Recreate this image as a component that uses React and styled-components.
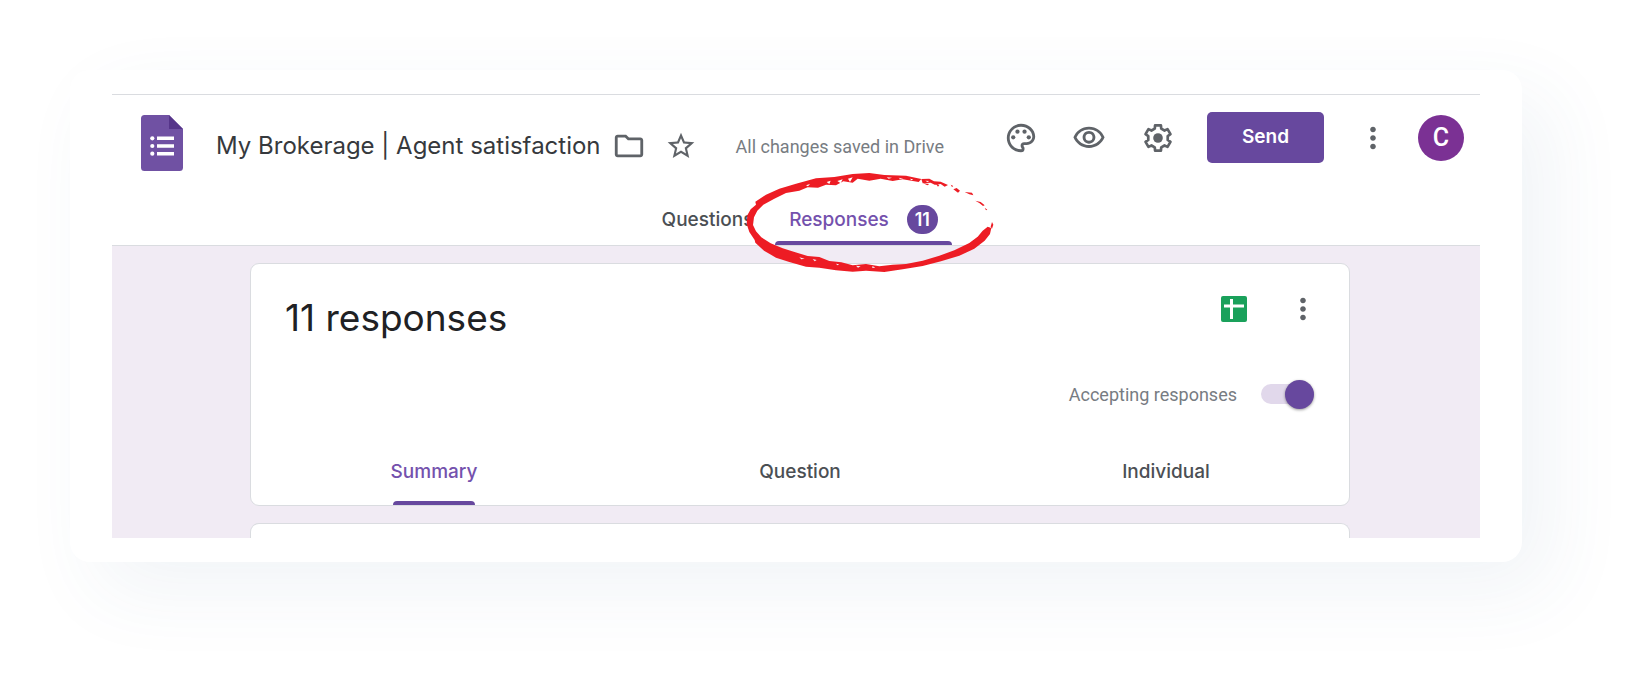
import React, { useState } from 'react';
import styled, { createGlobalStyle } from 'styled-components';
import {
    MdMoreVert,
    MdOutlineFolder,
    MdOutlinePalette,
    MdOutlineVisibility,
    MdStarOutline,
} from 'react-icons/md';


const GlobalStyle = createGlobalStyle`
    * {
        box-sizing: border-box;
    }

    body {
        margin: 0;
        background-color: #fff;
        font-family: Inter, 'Liberation Sans', sans-serif;
        color: #202124;
    }

    button {
        padding: 0;
        border: none;
        background: none;
        font-family: inherit;
        cursor: pointer;
    }
`;

const Page = styled.main`
    padding: 70px 130px 130px 70px;
`;

const Frame = styled.div`
    padding: 24px 42px;
    border-radius: 20px;
    background-color: #fff;
    box-shadow: 28px 28px 80px rgba(60, 100, 140, 0.07);
`;

const Header = styled.header`
    border-top: 1px solid #dadce0;
    border-bottom: 1px solid #dadce0;
`;

const TopRow = styled.div`
    display: flex;
    justify-content: space-between;
    align-items: flex-start;
    height: 98px;
    padding: 17px 16px 0 29px;
`;

const TitleGroup = styled.div`
    display: flex;
    align-items: flex-start;
    padding-top: 3px;
`;

const TitleLine = styled.div`
    display: flex;
    align-items: center;
    height: 62px;
    margin-left: 33px;
`;

const Title = styled.h1`
    margin: 0 11px 0 0;
    font-size: 24px;
    font-weight: 400;
    line-height: 32px;
    color: #36393d;
    white-space: nowrap;
`;

const Saved = styled.span`
    margin-left: 39px;
    font-family: Roboto, sans-serif;
    font-size: 18px;
    color: #777c82;
    white-space: nowrap;
`;

const Actions = styled.div`
    display: flex;
    align-items: center;
    height: 51px;
`;

const IconButton = styled.button`
    display: flex;
    flex-shrink: 0;
    margin-left: ${({ gap }) => gap || 0}px;
    color: #5f6368;
`;

const SendButton = styled.button`
    width: 117px;
    height: 51px;
    margin: 0 32px;
    padding-bottom: 2px;
    border-radius: 5px;
    && {
        background-color: #67489e;
    }
    color: #fff;
    font-size: 19px;
    font-weight: 600;
`;

const Avatar = styled.button`
    width: 46px;
    height: 46px;
    margin-left: 28px;
    border-radius: 50%;
    && {
        background-color: #7b3194;
        font-family: Roboto, sans-serif;
    }
    color: #fff;
    font-size: 25px;
    font-weight: 500;
`;

const Tabs = styled.nav`
    display: flex;
    justify-content: center;
    height: 52px;
`;

const Tab = styled.button`
    position: relative;
    display: flex;
    justify-content: center;
    align-items: center;
    gap: 18px;
    min-width: ${({ width }) => width}px;
    color: ${({ active }) => (active ? '#7451ad' : '#4b4f54')};
    font-size: 19px;
    font-weight: 500;

    &::after {
        content: '';
        position: absolute;
        bottom: 0;
        left: 0;
        width: 100%;
        height: 4px;
        border-radius: 4px 4px 0 0;
        background-color: ${({ active }) => (active ? '#67489e' : 'transparent')};
    }
`;

const Badge = styled.span`
    width: 31px;
    border-radius: 15px;
    background-color: #67489e;
    color: #fff;
    font-size: 18px;
    font-weight: 600;
    line-height: 29px;
    text-align: center;
`;

const Scribble = styled.svg`
    position: absolute;
    z-index: 1;
    top: -22px;
    left: -29px;
    width: 250px;
    height: 104px;
    pointer-events: none;
`;

const Body = styled.section`
    display: flex;
    flex-direction: column;
    gap: 17px;
    padding: 17px 130px 0 138px;
    background-color: #f1ebf4;
`;

const Card = styled.article`
    border: 1px solid #dadce0;
    border-radius: 9px;
    background-color: #fff;
`;

const NextCard = styled(Card)`
    height: 15px;
    border-bottom: none;
    border-radius: 9px 9px 0 0;
`;

const CardTop = styled.div`
    display: flex;
    justify-content: space-between;
    align-items: flex-start;
    padding: 28px 29px 0 34px;
`;

const Count = styled.h2`
    margin: 0;
    font-size: 37px;
    font-weight: 400;
    line-height: 52px;
`;

const CardActions = styled.div`
    display: flex;
    align-items: center;
`;

const Accepting = styled.label`
    display: flex;
    justify-content: flex-end;
    align-items: center;
    gap: 24px;
    height: 52px;
    margin-top: 24px;
    padding-right: 35px;
    font-family: Roboto, sans-serif;
    font-size: 18px;
    color: #777c82;
`;

const Toggle = styled.input`
    appearance: none;
    position: relative;
    display: flex;
    align-items: center;
    width: 53px;
    height: 29px;
    margin: 0;
    cursor: pointer;

    &::before {
        content: '';
        width: 100%;
        height: 20px;
        border-radius: 10px;
        background-color: #e1d8eb;
    }

    &::after {
        content: '';
        position: absolute;
        top: 0;
        left: ${({ checked }) => (checked ? 24 : 0)}px;
        width: 29px;
        height: 29px;
        border-radius: 50%;
        background-color: ${({ checked }) => (checked ? '#67489e' : '#fafafa')};
        box-shadow: 0 1px 3px rgba(0, 0, 0, 0.4);
    }
`;

const SubTabs = styled.nav`
    display: grid;
    grid-template-columns: repeat(3, 1fr);
    height: 67px;
    margin-top: 18px;
`;

const SubTab = styled(Tab)`
    &::after {
        left: calc(50% - 41px);
        width: 82px;
    }
`;

const FormsLogo = () => (
    <svg width="42" height="56" viewBox="0 0 42 56" aria-label="Forms">
        <path d="M3.5 0H28l14 14v38.5a3.5 3.5 0 0 1-3.5 3.500h-35A3.5 3.5 0 0 1 0 52.5v-49A3.5 3.5 0 0 1 3.5 0z" fill="#7051a3" />
        <path d="M28 0l14 14H28z" fill="#56358a" />
        <g fill="#fff">
            <circle cx="11.3" cy="23.3" r="2.1" />
            <circle cx="11.3" cy="31" r="2.1" />
            <circle cx="11.3" cy="38.7" r="2.1" />
            <path d="M16 21.5h17V25H16zM16 29.300h17v3.500H16zM16 37h17v3.500H16z" />
        </g>
    </svg>
);

// six teeth, each one a pair of outer points between two inner ones
const gearPoints = [0, 60, 120, 180, 240, 300].flatMap(tooth => (
    [[-19, 7], [-13, 9.2], [13, 9.2], [19, 7]].map(([turn, radius]) => {
        const angle = (tooth + turn) * Math.PI / 180;
        return `${(12 + radius * Math.sin(angle)).toFixed(2)},${(12 - radius * Math.cos(angle)).toFixed(2)}`;
    })
)).join(' ');

const GearIcon = () => (
    <svg width="34" height="34" viewBox="0 0 24 24" aria-hidden="true">
        <polygon
            points={gearPoints}
            fill="none"
            stroke="currentColor"
            strokeWidth="1.9"
            strokeLinejoin="round"
        />
        <circle cx="12" cy="12" r="3.4" fill="currentColor" />
    </svg>
);

const SheetsIcon = () => (
    <svg width="26" height="26" viewBox="0 0 26 26" aria-hidden="true">
        <rect width="26" height="26" rx="2" fill="#1aa15b" />
        <path d="M3 8.500h6V3h3v5.500h11v3H12V23H9V11.500H3z" fill="#fff" />
    </svg>
);

// hand drawn marker circle, the stroke dries out towards the top right
const MarkerCircle = () => (
    <Scribble viewBox="320 33 750 312" aria-hidden="true">
        <g fill="#ed1c24">
            <path d="M640 42L690 39L735 45L800 47L846 57L838 66L790 58L760 63L724 56L690 62L655 56L640 68L612 64L590 76L560 74L536 83L505 82L480 92L440 99L405 116L372 134L354 152L344 172L341 195L350 214L366 232L394 250L430 265L468 277L505 288L540 291L570 303L606 307L640 316L680 312L720 319L760 314L800 312L850 302L900 287L945 271L990 249L1015 230L1030 212L1045 200L1056 204L1052 222L1036 242L1005 266L960 287L905 304L850 318L790 328L735 336L680 332L640 335L590 331L540 323L500 320L450 306L410 293L374 272L348 248L346 240L330 216L322 192L324 166L334 148L350 134L348 125L380 104L420 86L470 71L530 55L585 51Z" />
            <path d="M846 57l24-1 14 8 20 1 22 10-10 5-12-8-18 2-12-6-24 2zM852 70l18 2-6 4zM890 72l10 3-4 5zM934 74l8 4-4 3zM942 88l10-4 10 8-6 6zM976 96l22 2 4 8-12-3zM1008 122l16 4 12 10-5 2-10-8zM1036 143l8 6-4 2zM1058 186l4 8-4 12-4-6z" />
        </g>
        <g fill="#fff">
            <path d="M562 66l12-4-4 10zM594 63l16-5-6 12zM626 56l14-4-8 14zM742 52l16 1-10 3zM778 53l14 3-10 1zM812 56l10 2-6 3zM858 62l12 1-6 3zM500 76l12-4-6 7z" />
        </g>
        <g fill="#f1ebf4">
            <path d="M480 292l16 4-10 2zM520 297l12 3-6 4zM650 317l14 2-8 4zM700 318l8 6-10-1zM590 311l10 2-6 3z" />
        </g>
    </Scribble>
);

export default function App() {

    const [accepting, setAccepting] = useState(true);

    return (
        <>
            <GlobalStyle />
            <Page>
                <Frame>
                    <Header>
                        <TopRow>
                            <TitleGroup>
                                <FormsLogo />
                                <TitleLine>
                                    <Title>My Brokerage | Agent satisfaction</Title>
                                    <IconButton aria-label="Move to folder"><MdOutlineFolder size={34} /></IconButton>
                                    <IconButton gap={19} aria-label="Star"><MdStarOutline size={32} /></IconButton>
                                    <Saved>All changes saved in Drive</Saved>
                                </TitleLine>
                            </TitleGroup>
                            <Actions>
                                <IconButton aria-label="Customize theme"><MdOutlinePalette size={34} /></IconButton>
                                <IconButton gap={34} aria-label="Preview"><MdOutlineVisibility size={34} /></IconButton>
                                <IconButton gap={35} aria-label="Settings"><GearIcon /></IconButton>
                                <SendButton>Send</SendButton>
                                <IconButton aria-label="More"><MdMoreVert size={34} /></IconButton>
                                <Avatar aria-label="Account">C</Avatar>
                            </Actions>
                        </TopRow>
                        <Tabs>
                            <Tab width={135}>Questions</Tab>
                            <Tab width={177} active>
                                Responses
                                <Badge>11</Badge>
                                <MarkerCircle />
                            </Tab>
                        </Tabs>
                    </Header>
                    <Body>
                        <Card>
                            <CardTop>
                                <Count>11 responses</Count>
                                <CardActions>
                                    <IconButton aria-label="View in Sheets"><SheetsIcon /></IconButton>
                                    <IconButton gap={39} aria-label="More options"><MdMoreVert size={34} /></IconButton>
                                </CardActions>
                            </CardTop>
                            <Accepting>
                                Accepting responses
                                <Toggle
                                    type="checkbox"
                                    checked={accepting}
                                    onChange={() => setAccepting(!accepting)}
                                />
                            </Accepting>
                            <SubTabs>
                                <SubTab active>Summary</SubTab>
                                <SubTab>Question</SubTab>
                                <SubTab>Individual</SubTab>
                            </SubTabs>
                        </Card>
                        <NextCard />
                    </Body>
                </Frame>
            </Page>
        </>
    )

}
